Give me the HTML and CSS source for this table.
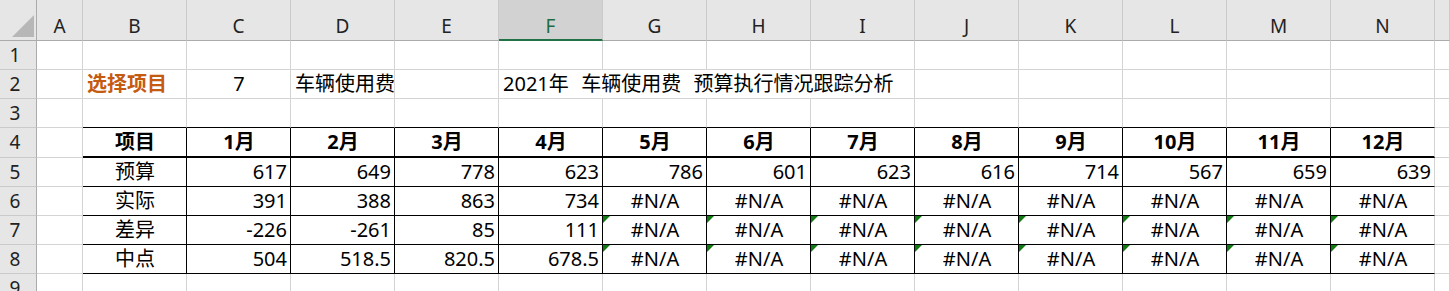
FILE: index.html
```html
<!DOCTYPE html>
<html lang="zh-CN">
<head>
<meta charset="utf-8">
<title>车辆使用费 预算执行情况跟踪分析</title>
<link rel="stylesheet" href="styles.css">
</head>
<body>
<div class="sheet">
  <div class="row">
    <div class="corner"><svg width="22" height="22" viewBox="0 0 22 22"><polygon points="22,0 22,22 0,22" fill="#b7b7b7"/></svg></div>
    <div class="ch">A</div><div class="ch">B</div><div class="ch">C</div><div class="ch">D</div><div class="ch">E</div>
    <div class="ch sel">F</div><div class="ch">G</div><div class="ch">H</div><div class="ch">I</div><div class="ch">J</div>
    <div class="ch">K</div><div class="ch">L</div><div class="ch">M</div><div class="ch">N</div><div class="ch"></div>
  </div>

  <div class="row">
    <div class="rh">1</div>
    <div class="c"></div><div class="c"></div><div class="c"></div><div class="c"></div><div class="c"></div>
    <div class="c"></div><div class="c"></div><div class="c"></div><div class="c"></div><div class="c"></div>
    <div class="c"></div><div class="c"></div><div class="c"></div><div class="c"></div><div class="c"></div>
  </div>

  <div class="row">
    <div class="rh">2</div>
    <div class="c"></div>
    <div class="c label">选择项目</div>
    <div class="c ctr">7</div>
    <div class="c">车辆使用费</div>
    <div class="c"></div>
    <div class="c title">2021年  车辆使用费  预算执行情况跟踪分析</div>
    <div class="c"></div><div class="c"></div><div class="c"></div><div class="c"></div><div class="c"></div><div class="c"></div>
  </div>

  <div class="row">
    <div class="rh">3</div>
    <div class="c"></div>
    <div class="c tt"></div><div class="c tt"></div><div class="c tt"></div><div class="c tt"></div><div class="c tt"></div>
    <div class="c tt"></div><div class="c tt"></div><div class="c tt"></div><div class="c tt"></div><div class="c tt"></div>
    <div class="c tt"></div><div class="c tt"></div><div class="c tt"></div>
    <div class="c"></div>
  </div>

  <div class="row">
    <div class="rh">4</div>
    <div class="c"></div>
    <div class="c th">项目</div><div class="c th">1月</div><div class="c th">2月</div><div class="c th">3月</div><div class="c th">4月</div>
    <div class="c th">5月</div><div class="c th">6月</div><div class="c th">7月</div><div class="c th">8月</div><div class="c th">9月</div>
    <div class="c th">10月</div><div class="c th">11月</div><div class="c th last">12月</div>
    <div class="c"></div>
  </div>

  <div class="row">
    <div class="rh">5</div>
    <div class="c"></div>
    <div class="c td ctr">预算</div>
    <div class="c td num">617</div><div class="c td num">649</div><div class="c td num">778</div><div class="c td num">623</div>
    <div class="c td num">786</div><div class="c td num">601</div><div class="c td num">623</div><div class="c td num">616</div>
    <div class="c td num">714</div><div class="c td num">567</div><div class="c td num">659</div><div class="c td num last">639</div>
    <div class="c"></div>
  </div>

  <div class="row">
    <div class="rh">6</div>
    <div class="c"></div>
    <div class="c td ctr">实际</div>
    <div class="c td num">391</div><div class="c td num">388</div><div class="c td num">863</div><div class="c td num">734</div>
    <div class="c td ctr">#N/A</div><div class="c td ctr">#N/A</div><div class="c td ctr">#N/A</div><div class="c td ctr">#N/A</div>
    <div class="c td ctr">#N/A</div><div class="c td ctr">#N/A</div><div class="c td ctr">#N/A</div><div class="c td ctr last">#N/A</div>
    <div class="c"></div>
  </div>

  <div class="row">
    <div class="rh">7</div>
    <div class="c"></div>
    <div class="c td ctr">差异</div>
    <div class="c td num">-226</div><div class="c td num">-261</div><div class="c td num">85</div><div class="c td num">111</div>
    <div class="c td ctr err">#N/A</div><div class="c td ctr err">#N/A</div><div class="c td ctr err">#N/A</div><div class="c td ctr err">#N/A</div>
    <div class="c td ctr err">#N/A</div><div class="c td ctr err">#N/A</div><div class="c td ctr err">#N/A</div><div class="c td ctr err last">#N/A</div>
    <div class="c"></div>
  </div>

  <div class="row">
    <div class="rh">8</div>
    <div class="c"></div>
    <div class="c td ctr">中点</div>
    <div class="c td num">504</div><div class="c td num">518.5</div><div class="c td num">820.5</div><div class="c td num">678.5</div>
    <div class="c td ctr err">#N/A</div><div class="c td ctr err">#N/A</div><div class="c td ctr err">#N/A</div><div class="c td ctr err">#N/A</div>
    <div class="c td ctr err">#N/A</div><div class="c td ctr err">#N/A</div><div class="c td ctr err">#N/A</div><div class="c td ctr err last">#N/A</div>
    <div class="c"></div>
  </div>

  <div class="row">
    <div class="rh">9</div>
    <div class="c"></div><div class="c"></div><div class="c"></div><div class="c"></div><div class="c"></div>
    <div class="c"></div><div class="c"></div><div class="c"></div><div class="c"></div><div class="c"></div>
    <div class="c"></div><div class="c"></div><div class="c"></div><div class="c"></div><div class="c"></div>
  </div>
</div>
</body>
</html>
```

FILE: styles.css
```css
html, body {
  margin: 0;
  padding: 0;
  background: #ffffff;
  overflow: hidden;
}

body {
  font-family: "Noto Sans", "Noto Sans CJK SC", sans-serif;
  font-size: 20px;
  color: #000000;
}

.sheet {
  display: grid;
  grid-template-columns: 37px 46px repeat(13, 104px) 1fr;
  grid-template-rows: 41px 29px 29px 29px 30px 29px 29px 29px 29px 29px;
}

.row {
  display: contents;
}

.corner {
  box-sizing: border-box;
  background: #e6e6e6;
  border-right: 1px solid #ababab;
  border-bottom: 1px solid #ababab;
  display: flex;
  align-items: flex-end;
  justify-content: flex-end;
  padding: 0 2px 3px 0;
}

.ch {
  box-sizing: border-box;
  background: #e6e6e6;
  border-right: 1px solid #cacaca;
  border-bottom: 1px solid #ababab;
  display: flex;
  align-items: center;
  justify-content: center;
  padding-top: 12px;
  font-family: "Noto Sans", sans-serif;
  font-size: 19px;
  color: #222222;
  line-height: 1;
}

.ch.sel {
  background: #d2d2d2;
  border-bottom: 2px solid #217346;
  color: #1e6b41;
  padding-top: 13px;
}

.rh {
  box-sizing: border-box;
  background: #e6e6e6;
  border-right: 1px solid #ababab;
  border-bottom: 1px solid #cacaca;
  display: flex;
  align-items: center;
  justify-content: center;
  padding-right: 6px;
  font-family: "Noto Sans", sans-serif;
  font-size: 19px;
  color: #222222;
  line-height: 1;
}

.c {
  box-sizing: border-box;
  border-right: 1px solid #d4d4d4;
  border-bottom: 1px solid #d4d4d4;
  display: flex;
  align-items: center;
  padding: 0 3px 0 4px;
  white-space: pre;
  overflow: hidden;
  line-height: 1;
  position: relative;
}

.label {
  color: #c55a11;
  font-weight: bold;
}

.ctr {
  justify-content: center;
}

.num {
  justify-content: flex-end;
}

.title {
  grid-column: span 4;
  word-spacing: 1px;
}

.tt {
  border-bottom-color: #000000;
}

.th {
  border-right-color: #000000;
  border-bottom: 2px solid #000000;
  justify-content: center;
  font-weight: bold;
}

.td {
  border-right-color: #000000;
  border-bottom-color: #000000;
}

.th.last,
.td.last {
  border-right-color: #d4d4d4;
}

.err::before {
  content: "";
  position: absolute;
  top: 0;
  left: 0;
  width: 0;
  height: 0;
  border-top: 7px solid #127a12;
  border-right: 7px solid transparent;
}
```
